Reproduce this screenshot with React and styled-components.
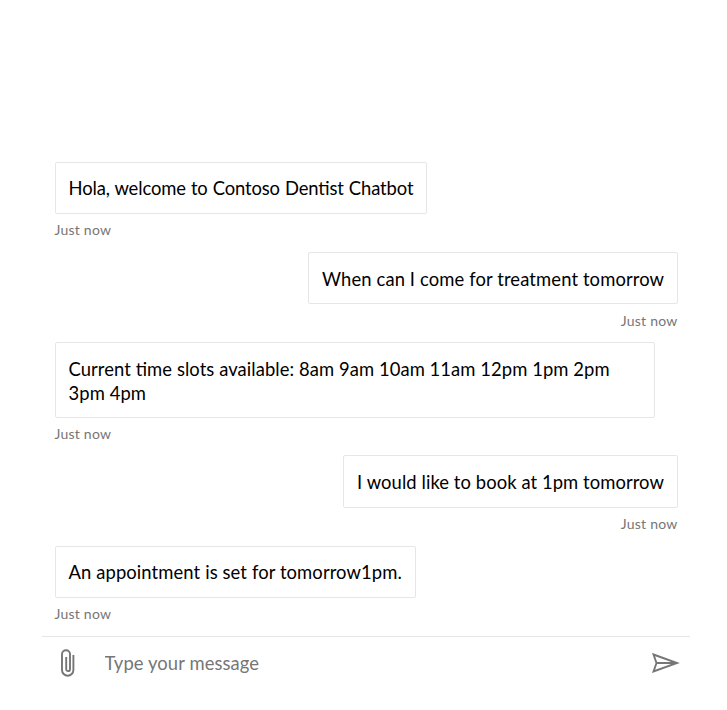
import React from "react";
import styled, { createGlobalStyle } from "styled-components";

const GlobalStyle = createGlobalStyle`
  * { box-sizing: border-box; }
  body { margin: 0; background: #fff; }
`;

const Chat = styled.main`
  display: flex;
  flex-direction: column;
  width: 727px;
  height: 710px;
  padding: 0 37px 22px 42px;
  background: #fff;
  font-family: Lato, sans-serif;
`;

const Transcript = styled.section`
  display: flex;
  flex: 1;
  flex-direction: column;
  justify-content: flex-end;
  padding: 0 12px 10px 13px;
`;

const Message = styled.article`
  display: flex;
  flex-direction: column;
  align-items: ${(p) => (p.$mine ? "flex-end" : "flex-start")};
  height: ${(p) => p.$height}px;
`;

const Bubble = styled.div`
  width: ${(p) => p.$width}px;
  height: ${(p) => p.$height}px;
  padding: ${(p) => p.$top}px 0 0 ${(p) => p.$left}px;
  border: 1px solid #e6e6e6;
  border-radius: 2px;
  color: #000;
  font-size: 18.4px;
  font-feature-settings: "liga" 1;
  line-height: 24px;
  letter-spacing: ${(p) => p.$spacing}px;
  word-spacing: ${(p) => p.$wordSpacing || 0}px;
  white-space: pre-line;
`;

const Time = styled.time`
  margin-top: ${(p) => p.$gap}px;
  margin-left: -0.6px;
  margin-right: 0.4px;
  color: #767676;
  font-size: 14px;
  line-height: 18px;
  letter-spacing: 0.25px;
`;

const SendBox = styled.form`
  display: flex;
  align-items: center;
  width: 648px;
  height: 52px;
  border-top: 1px solid #e6e6e6;
`;

const IconButton = styled.button`
  display: grid;
  place-items: center;
  width: 52px;
  height: 51px;
  padding: 0;
  border: 0;
  background: none;
  color: #767676;
`;

const SendButton = styled(IconButton)`
  padding-left: 3px;
`;

const Input = styled.input`
  flex: 1;
  min-width: 0;
  height: 51px;
  padding: 0 0 0 10.5px;
  border: 0;
  outline: 0;
  background: none;
  font: 18.4px Lato, sans-serif;
  letter-spacing: 0.1px;
  &::placeholder { color: #767676; opacity: 1; }
`;

const messages = [
  { text: "Hola, welcome to Contoso Dentist Chatbot", width: 372, bubble: 52, height: 90, spacing: -0.11, wordSpacing: 0.4, top: 13, left: 12.5, gap: 7 },
  { text: "When can I come for treatment tomorrow", width: 370, bubble: 52, height: 90, spacing: 0.12, top: 14, left: 13, gap: 8, mine: true },
  { text: "Current time slots available: 8am 9am 10am 11am 12pm 1pm 2pm\n3pm 4pm", width: 600, bubble: 76, height: 113, spacing: 0.08, top: 14, left: 12.5, gap: 7 },
  { text: "I would like to book at 1pm tomorrow", width: 335, bubble: 53, height: 91, spacing: 0.08, top: 14, left: 13, gap: 7, mine: true },
  { text: "An appointment is set for tomorrow1pm.", width: 361, bubble: 52, height: 80, spacing: 0.11, top: 13, left: 12.5, gap: 7 },
];

function Paperclip() {
  return (
    <svg width="14" height="28" viewBox="0 0 14 28" fill="none" stroke="currentColor" strokeWidth="1.9">
      <path d="M5.2 8v12.2a1.9 1.9 0 0 0 3.8 0V5.2a4 4 0 0 0-8 0V21a5.7 5.7 0 0 0 11.4 0V6" />
    </svg>
  );
}

function SendIcon() {
  return (
    <svg width="28" height="20" viewBox="0 0 28 20" fill="none" stroke="currentColor" strokeWidth="1.9">
      <path d="M1.5 1.5 25 10 1.5 18.5 4.5 10ZM4.5 10H25" />
    </svg>
  );
}

export default function App() {
  return (
    <Chat>
      <GlobalStyle />
      <Transcript>
        {messages.map((m) => (
          <Message key={m.text} $mine={m.mine} $height={m.height}>
            <Bubble
              $width={m.width}
              $height={m.bubble}
              $spacing={m.spacing}
              $wordSpacing={m.wordSpacing}
              $top={m.top}
              $left={m.left}
            >
              {m.text}
            </Bubble>
            <Time $gap={m.gap}>Just now</Time>
          </Message>
        ))}
      </Transcript>
      <SendBox>
        <IconButton type="button" aria-label="Attach file"><Paperclip /></IconButton>
        <Input placeholder="Type your message" />
        <SendButton type="button" aria-label="Send"><SendIcon /></SendButton>
      </SendBox>
    </Chat>
  );
}
